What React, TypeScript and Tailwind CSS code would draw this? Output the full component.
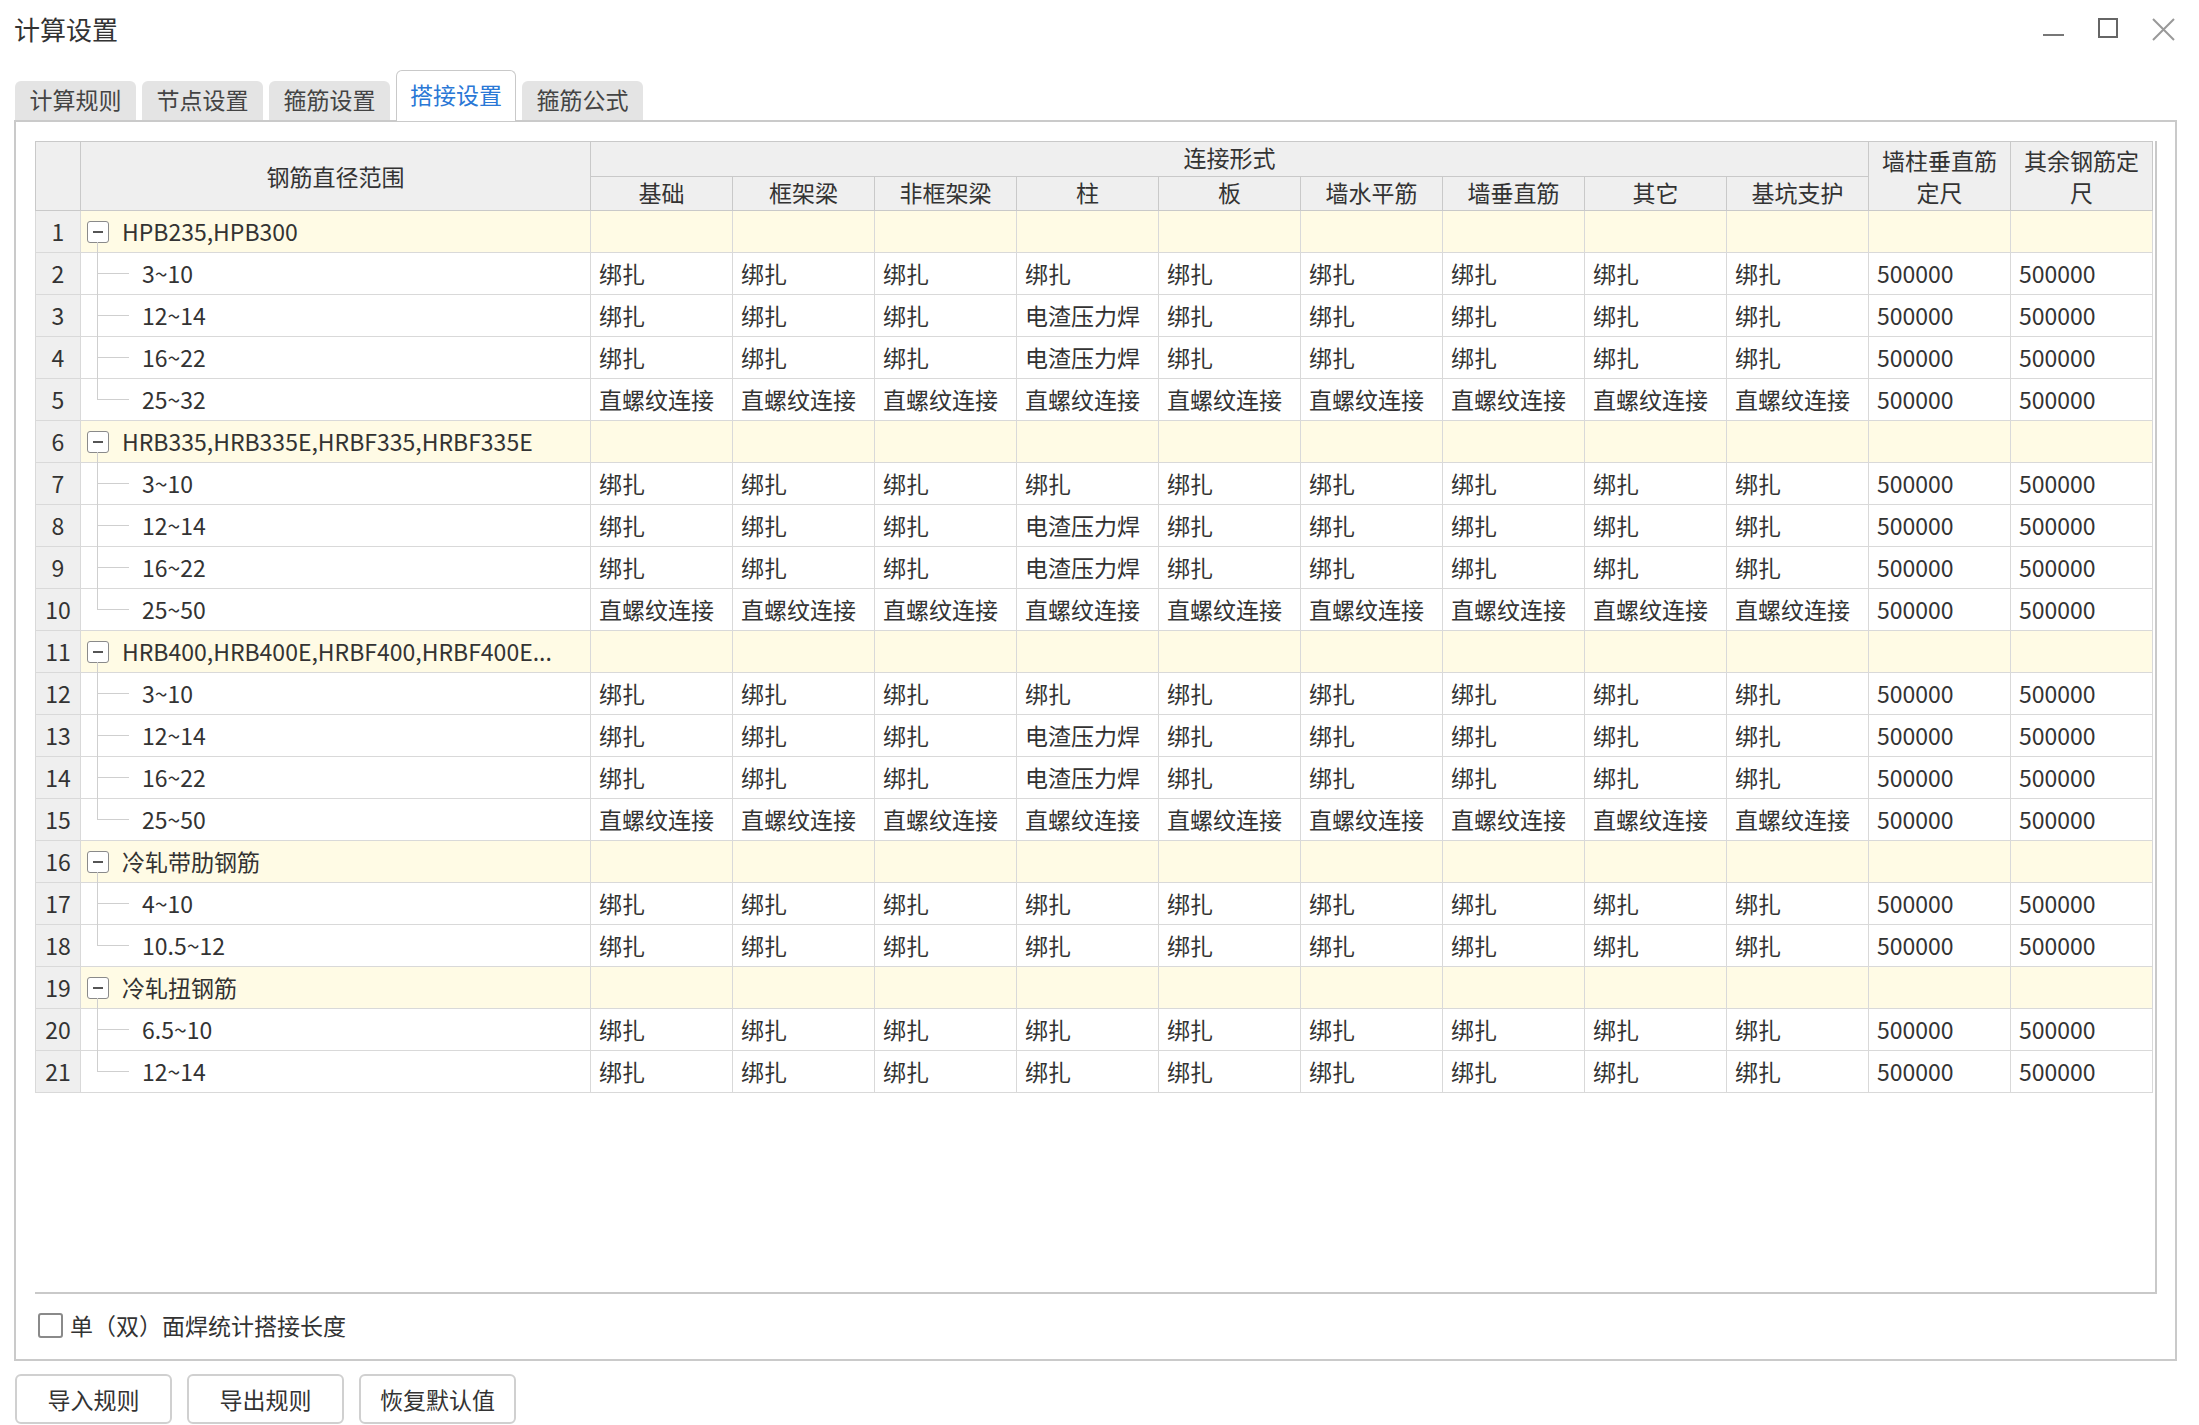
import React from 'react'

// ─── Data ─────────────────────────────────────────────────────────────────────
const JOIN_COLS = ['基础', '框架梁', '非框架梁', '柱', '板', '墙水平筋', '墙垂直筋', '其它', '基坑支护']

type Child = { label: string; kind: 'tie' | 'weld' | 'screw' }
type Group = { name: string; children: Child[] }

const STEEL_STD: Child[] = [
  { label: '3~10', kind: 'tie' },
  { label: '12~14', kind: 'weld' },
  { label: '16~22', kind: 'weld' },
]

const GROUPS: Group[] = [
  { name: 'HPB235,HPB300', children: [...STEEL_STD, { label: '25~32', kind: 'screw' }] },
  { name: 'HRB335,HRB335E,HRBF335,HRBF335E', children: [...STEEL_STD, { label: '25~50', kind: 'screw' }] },
  { name: 'HRB400,HRB400E,HRBF400,HRBF400E...', children: [...STEEL_STD, { label: '25~50', kind: 'screw' }] },
  { name: '冷轧带肋钢筋', children: [{ label: '4~10', kind: 'tie' }, { label: '10.5~12', kind: 'tie' }] },
  { name: '冷轧扭钢筋', children: [{ label: '6.5~10', kind: 'tie' }, { label: '12~14', kind: 'tie' }] },
]

function cellValue(kind: Child['kind'], col: string) {
  if (kind === 'screw') return '直螺纹连接'
  if (kind === 'weld' && col === '柱') return '电渣压力焊'
  return '绑扎'
}

const TABS = ['计算规则', '节点设置', '箍筋设置', '搭接设置', '箍筋公式']

// ─── Bits ─────────────────────────────────────────────────────────────────────
const th = 'border border-[#c9c9c9] bg-[#efefef] font-normal text-center align-middle p-0'
const td = 'border border-[#d9d9d9] p-0 pl-[8px] text-left align-middle whitespace-nowrap overflow-hidden'

function TreeCell({ group, label, last }: { group?: boolean; label: string; last?: boolean }) {
  return (
    <div className="relative h-[41px] flex items-center">
      {group ? (
        <>
          <div className="ml-[6px] w-[22px] h-[22px] border border-[#8a8a8a] rounded-[3px] bg-white flex items-center justify-center">
            <div className="w-[10px] h-[2px] bg-[#555]" />
          </div>
          <div className="absolute left-[16px] top-[31px] bottom-[-1px] w-px bg-[#cfcfcf]" />
          <span className="ml-[13px]">{label}</span>
        </>
      ) : (
        <>
          <div className={`absolute left-[16px] top-[-1px] w-px bg-[#cfcfcf] ${last ? 'h-[21px]' : 'h-[43px]'}`} />
          <div className="absolute left-[16px] top-[20px] w-[32px] h-px bg-[#cfcfcf]" />
          <span className="ml-[61px]">{label}</span>
        </>
      )}
    </div>
  )
}

export default function App() {
  let rowNo = 0
  const rows: React.ReactNode[] = []
  GROUPS.forEach((g, gi) => {
    rowNo += 1
    rows.push(
      <tr key={`g${gi}`} className="h-[42px] bg-[#fffbe5]">
        <td className="border border-[#d9d9d9] bg-[#efefef] text-center p-0">{rowNo}</td>
        <td className="border border-[#d9d9d9] p-0">
          <TreeCell group label={g.name} />
        </td>
        {JOIN_COLS.map((c) => <td key={c} className={td} />)}
        <td className={td} />
        <td className={td} />
      </tr>,
    )
    g.children.forEach((ch, ci) => {
      rowNo += 1
      rows.push(
        <tr key={`g${gi}c${ci}`} className="h-[42px] bg-white">
          <td className="border border-[#d9d9d9] bg-[#efefef] text-center p-0">{rowNo}</td>
          <td className="border border-[#d9d9d9] p-0">
            <TreeCell label={ch.label} last={ci === g.children.length - 1} />
          </td>
          {JOIN_COLS.map((c) => <td key={c} className={td}>{cellValue(ch.kind, c)}</td>)}
          <td className={td}>500000</td>
          <td className={td}>500000</td>
        </tr>,
      )
    })
  })

  return (
    <div
      className="w-[2199px] h-[1425px] bg-white overflow-hidden text-[#333] text-[23px] leading-none"
      style={{ fontFamily: '"Noto Sans CJK SC", "Microsoft YaHei", sans-serif' }}
    >
      {/* ── Title bar ── */}
      <div className="h-[70px] flex items-start justify-between">
        <div className="pl-[14px] pt-[12px] text-[26px] leading-[34px] text-[#333]">计算设置</div>
        <div className="flex items-start pt-[18px] pr-[24px] gap-[34px]">
          <div className="w-[21px] h-[21px] flex items-end pb-[3px]">
            <div className="w-[21px] h-[2px] bg-[#777]" />
          </div>
          <div className="w-[20px] h-[20px] border-2 border-[#666]" />
          <svg width="23" height="23" viewBox="0 0 23 23">
            <path d="M1 1 L22 22 M22 1 L1 22" stroke="#999" strokeWidth="2" fill="none" />
          </svg>
        </div>
      </div>

      {/* ── Tabs ── */}
      <div className="h-[50px] flex items-end pl-[15px] gap-[6px] relative z-10">
        {TABS.map((t) => {
          const active = t === '搭接设置'
          return active ? (
            <div
              key={t}
              className="w-[120px] h-[51px] -mb-px bg-white border border-b-0 border-[#c9c9c9] rounded-t-[6px] flex items-center justify-center pb-[3px] text-[#2a78d6] text-[23px]"
            >
              {t}
            </div>
          ) : (
            <div
              key={t}
              className="w-[121px] h-[39px] bg-[#e4e4e4] rounded-t-[6px] flex items-center justify-center pb-[2px] text-[#444] text-[23px]"
            >
              {t}
            </div>
          )
        })}
      </div>

      {/* ── Panel ── */}
      <div className="ml-[14px] mr-[22px] h-[1241px] border-2 border-[#cacaca] pt-[19px] pl-[19px] pr-[18px]">
        <div className="h-[1153px] border-2 border-[#c9c9c9] border-t-0 border-l-0 overflow-hidden">
          <table className="border-collapse table-fixed" style={{ width: 2118 }}>
            <colgroup>
              <col className="w-[45px]" />
              <col className="w-[510px]" />
              {Array.from({ length: 11 }).map((_, i) => <col key={i} className="w-[142px]" />)}
            </colgroup>
            <thead>
              <tr className="h-[35px]">
                <th rowSpan={2} className={th} />
                <th rowSpan={2} className={th}>钢筋直径范围</th>
                <th colSpan={9} className={`${th} pb-[3px]`}>连接形式</th>
                <th rowSpan={2} className={`${th} leading-[32px]`}>墙柱垂直筋<br />定尺</th>
                <th rowSpan={2} className={`${th} leading-[32px]`}>其余钢筋定<br />尺</th>
              </tr>
              <tr className="h-[34px]">
                {JOIN_COLS.map((c) => <th key={c} className={`${th} pb-[2px]`}>{c}</th>)}
              </tr>
            </thead>
            <tbody>{rows}</tbody>
          </table>
        </div>

        {/* ── Option ── */}
        <div className="h-[62px] flex items-center">
          <div className="ml-[3px] w-[25px] h-[25px] border-2 border-[#8a8a8a] rounded-[3px] bg-white" />
          <span className="ml-[7px]">单（双）面焊统计搭接长度</span>
        </div>
      </div>

      {/* ── Buttons ── */}
      <div className="flex gap-[15px] pl-[15px] pt-[13px]">
        {['导入规则', '导出规则', '恢复默认值'].map((b) => (
          <button
            key={b}
            className="w-[157px] h-[50px] border-2 border-[#d0d0d0] rounded-[6px] bg-white text-[23px] text-[#333]"
          >
            {b}
          </button>
        ))}
      </div>
    </div>
  )
}
